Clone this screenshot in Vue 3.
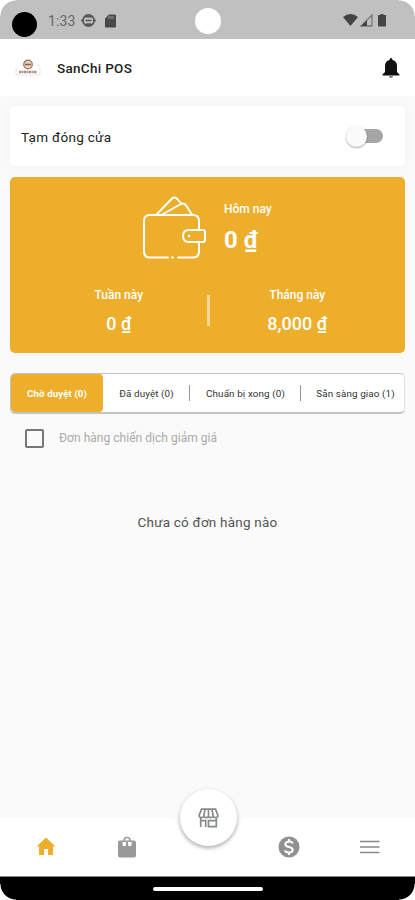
<script setup>
const tabs = [
  { label: 'Chờ duyệt (0)', w: 92, active: true },
  { label: 'Đã duyệt (0)', w: 87 },
  { label: 'Chuẩn bị xong (0)', w: 111 },
  { label: 'Sẵn sàng giao (1)', w: 109 },
]
</script>

<template>
  <div class="screen">
    <div class="status">
      <i class="cam"></i>
      <span class="time">1:33</span>
      <svg class="face" width="15" height="15" viewBox="0 0 15 15" fill="none" stroke="#555" stroke-width="1.7">
        <circle cx="7.5" cy="7.5" r="5.6" /><path d="M0 7.5h3M12 7.5h3M4.5 7.5h6" /><path d="M4 3.6h7M5 11.2h5" />
      </svg>
      <svg class="sd" width="11" height="14" viewBox="0 0 11 14"><path d="M4 .5h6q1 0 1 1v11q0 1-1 1H1q-1 0-1-1V4.500z" fill="#484848" /><path d="M4 2v3M6 2v3M8 2v3" stroke="#aaa" stroke-width=".8" /></svg>
      <i class="hole"></i>
      <svg class="sys" width="46" height="15" viewBox="0 0 46 15">
        <path d="M0 4q7.500-6 15 0L7.500 13z" fill="#444" />
        <path d="M29 2v11H18z" fill="#c0c0c0" stroke="#777" stroke-width="1.300" /><path d="M24 7v6h-6z" fill="#444" />
        <path d="M37.500 1h3v1H43v10.500q0 1-1 1h-6q-1 0-1-1V2h2.500z" fill="#444" />
      </svg>
    </div>

    <header class="appbar">
      <svg class="logo" width="26" height="18" viewBox="0 0 26 18">
        <circle cx="13" cy="5.500" r="4.300" fill="#e9d3bd" stroke="#9a7458" stroke-width="1.200" />
        <path d="M10 5.500h6" stroke="#8a6450" stroke-width="1.500" />
        <path d="M4 13h18" stroke="#a88f88" stroke-width="2.400" stroke-dasharray="2 .5" />
        <path d="M3 9H1v7h4M23 5l2 5v6h-4M5 16h16" fill="none" stroke="#eadfdb" stroke-width=".8" />
      </svg>
      <h1>SanChi POS</h1>
      <svg class="bell" width="18" height="21" viewBox="0 0 18 21">
        <path d="M9 0Q10.500 0 10.500 2Q15 3.200 15 8v6l2.500 2.500v1H.5v-1L3 14V8Q3 3.200 7.500 2Q7.500 0 9 0z" fill="#111" /><path d="M7 18h4q0 2-2 2t-2-2z" fill="#777" />
      </svg>
    </header>

    <main>
      <section class="toggle-card">
        <span>Tạm đóng cửa</span>
        <div class="switch"><i></i></div>
      </section>

      <section class="wallet">
        <div class="today">
          <svg width="63" height="64" viewBox="0 0 63 64" fill="none" stroke="#fff" stroke-width="2" stroke-linecap="round" stroke-linejoin="round">
            <path d="M25 61.500H7q-6 0-6-6V25q0-6 6-6h43q6 0 6 6v9M56 47v8.500q0 6-6 6H35" />
            <path d="M29.500 61.500h.1" stroke-width="2.600" />
            <path d="M14 18L29 2.500q2.500-2 5 0l4 5M20 18L38 8q3.500-1.500 5.500 2l5 8" />
            <path d="M46 34h14q2 0 2 2v8q0 2-2 2H46q-6 0-6-6t6-6z" /><path d="M46 40h.2" stroke-width="2.400" />
          </svg>
          <div class="today-text"><b class="cap">Hôm nay</b><b class="big">0 ₫</b></div>
        </div>
        <div class="periods">
          <div><b class="cap">Tuần này</b><b class="mid">0 ₫</b></div>
          <i></i>
          <div><b class="cap">Tháng này</b><b class="mid">8,000 ₫</b></div>
        </div>
      </section>

      <nav class="tabs">
        <div v-for="t in tabs" :key="t.label" class="tab" :class="{ active: t.active }" :style="{ width: t.w + 'px' }">{{ t.label }}</div>
      </nav>

      <label class="promo"><i></i><span>Đơn hàng chiến dịch giảm giá</span></label>
      <p class="empty">Chưa có đơn hàng nào</p>
    </main>

    <footer class="bottom">
      <svg class="shape" width="415" height="59" viewBox="0 0 415 59"><path d="M0 0H167Q174 0 176 5C181 21 193 32 208 32S235 21 240 5Q242 0 249 0H415V59H0z" fill="#fff" /></svg>
      <div class="items">
        <div><svg width="20" height="19" viewBox="0 0 20 19"><path d="M10 .5L19.500 9.500H17V18h-5v-6H8v6H3V9.500H.5z" fill="#edae2c" /></svg></div>
        <div><svg width="18" height="22" viewBox="0 0 18 22"><path d="M6 6V4.500a3 3 0 0 1 6 0V6" fill="none" stroke="#999" stroke-width="1.600" /><path fill-rule="evenodd" d="M2 4.500h14q2 0 2 2v13q0 2-2 2H2q-2 0-2-2v-13q0-2 2-2zM4.500 6v2.500a1.800 1.800 0 0 0 3.600 0V6zM10 6v2.500a1.800 1.800 0 0 0 3.600 0V6z" fill="#999" /></svg></div>
        <div></div>
        <div><svg width="22" height="22" viewBox="0 0 22 22"><circle cx="11" cy="11" r="10.500" fill="#919191" /><path d="M14.800 7.500Q14 5.500 11 5.500T7.300 8.200Q7.300 10.200 11 11T14.700 13.800Q14.700 16.500 11 16.500T7.200 14.200M11 3v2.500M11 16.500V19" fill="none" stroke="#fff" stroke-width="2" /></svg></div>
        <div><svg width="20" height="14" viewBox="0 0 20 14"><path d="M0 1.500h19.500M0 7h19.500M0 12.500h19.500" stroke="#8b8b8b" stroke-width="1.700" /></svg></div>
      </div>
      <div class="fab">
        <svg width="21" height="20" viewBox="0 0 21 20" fill="none" stroke="#858b8e" stroke-width="1.700">
          <path d="M3.500 1.200h14l2.300 6v1.500q-2.300 1.800-4.600 0q-2.300 1.800-4.700 0q-2.400 1.800-4.700 0q-2.300 1.800-4.600 0V7.200zM7 1.200L5.800 8.500M10.500 1.200v7.300M14 1.200l1.200 7.300M2.700 10v9M18.300 10v8.700H10.500v-6h7.800M2.700 12.700h5V19" />
        </svg>
      </div>
    </footer>
    <div class="gesture"><i></i></div>
  </div>
</template>

<style>
body { margin: 0; background: #fff; }
</style>

<style scoped>
* { box-sizing: border-box; }
.screen { width: 415px; height: 900px; display: flex; flex-direction: column; font-family: Roboto, sans-serif; background: #fafafa; overflow: hidden; }
svg { display: block; flex: none; }
.status { position: relative; height: 39px; flex: none; display: flex; align-items: center; background: #c0c0c0; padding-left: 12px; }
.status::before, .status::after { content: ""; position: absolute; top: 0; width: 16px; height: 16px; }
.status::before { left: 0; background: radial-gradient(circle at 100% 100%, transparent 15px, #fff 16px); }
.status::after { right: 0; background: radial-gradient(circle at 0 100%, transparent 15px, #fff 16px); }
.cam { width: 25px; height: 25px; border-radius: 50%; background: #000; margin-top: 10px; }
.time { width: 33px; margin-left: 11px; font-size: 14px; line-height: 20px; color: #666; margin-top: 3px; letter-spacing: .1px; }
.face { margin-top: 2px; }
.sd { margin: 2px 0 0 9px; }
.hole { position: absolute; left: 195px; top: 8px; width: 26px; height: 26px; border-radius: 50%; background: #fff; }
.sys { margin: 2px 26px 0 auto; }
.appbar { height: 57px; flex: none; display: flex; align-items: center; background: #fff; padding: 0 15px; }
.logo { margin-top: 1px; }
h1 { margin: 0 auto 0 16px; font-size: 13.500px; line-height: 20px; font-weight: 500; color: #222; letter-spacing: .3px; white-space: nowrap; }
.bell { margin: 2px 0 0; }
main { flex: 1; display: flex; flex-direction: column; padding: 10px 10px 0; }
.toggle-card { height: 60px; flex: none; display: flex; align-items: center; justify-content: space-between; padding: 0 22px 0 11px; border-radius: 4px; background: #fff; box-shadow: 0 0 8px rgba(0, 0, 0, .04); font-size: 13.500px; color: #222; letter-spacing: .3px; }
.toggle-card span { margin-top: 2px; }
.switch { width: 37px; height: 22px; display: flex; align-items: center; position: relative; }
.switch::before { content: ""; position: absolute; right: 0; width: 31px; height: 14px; border-radius: 7px; background: #a6a6a6; }
.switch i { position: relative; width: 21px; height: 21px; border-radius: 50%; background: #fafafa; box-shadow: 0 1px 2px rgba(0, 0, 0, .35); }
.wallet { height: 176px; flex: none; margin-top: 11px; border-radius: 5px; background: #edae2c; color: #fff; padding-top: 19px; }
.today { display: flex; padding-left: 133px; height: 91px; }
.today-text { margin-left: 18px; display: flex; flex-direction: column; }
.cap { font-size: 12px; line-height: 16px; font-weight: 500; margin-top: 5px; }
.big { font-size: 24px; line-height: 28px; font-weight: 700; margin-top: 9px; }
.periods { display: grid; grid-template-columns: 1fr 3px 1fr; padding: 0 20px 0 21px; }
.periods > div { display: flex; flex-direction: column; align-items: center; }
.periods .cap { margin-top: 0; }
.periods i { width: 3px; height: 31px; margin-top: 8px; background: #f6d79a; }
.mid { font-size: 18px; line-height: 22px; font-weight: 500; margin-top: 10px; }
.tabs { height: 41px; flex: none; margin-top: 20px; display: flex; border: 1px solid #c3c3c3; border-bottom-width: 2px; border-right-color: #ddd; border-radius: 5px; background: #fff; overflow: hidden; }
.tab { flex: none; display: flex; align-items: center; justify-content: center; padding-top: 1px; font-size: 9.900px; color: #333; white-space: nowrap; letter-spacing: .1px; }
.tab.active { background: #edae2c; color: #fff; font-weight: 700; font-size: 9.700px; border-radius: 4px; }
.tab:nth-child(2), .tab:nth-child(3) { background: linear-gradient(#999, #999) right center / 1px 16px no-repeat; }
.promo { display: flex; align-items: center; margin: 14px 0 0 15px; height: 20px; }
.promo i { width: 19px; height: 19px; border: 2px solid #777; border-radius: 2px; }
.promo span { margin-left: 15px; font-size: 12px; color: #aaa; letter-spacing: .03px; }
.empty { margin: 64px 0 0; text-align: center; font-size: 13.500px; line-height: 20px; color: #555; letter-spacing: .22px; }
.bottom { position: relative; height: 59px; flex: none; }
.shape { position: absolute; left: 0; top: 0; }
.items { position: relative; height: 59px; display: grid; grid-template-columns: repeat(5, 81px); padding-left: 5px; }
.items div { display: flex; align-items: center; justify-content: center; }
.fab { position: absolute; left: 180px; top: -28px; width: 57px; height: 57px; border-radius: 50%; background: #fff; display: flex; align-items: center; justify-content: center; box-shadow: 0 2px 4px rgba(0, 0, 0, .3); }
.gesture { height: 24px; flex: none; display: flex; align-items: center; justify-content: center; background: radial-gradient(circle at 100% 0, #000 15px, #fff 16px) left bottom / 16px 16px no-repeat, radial-gradient(circle at 0 0, #000 15px, #fff 16px) right bottom / 16px 16px no-repeat, #000; border-top: 1px solid #888; }
.gesture i { width: 110px; height: 4px; border-radius: 2px; background: #fff; }
</style>
